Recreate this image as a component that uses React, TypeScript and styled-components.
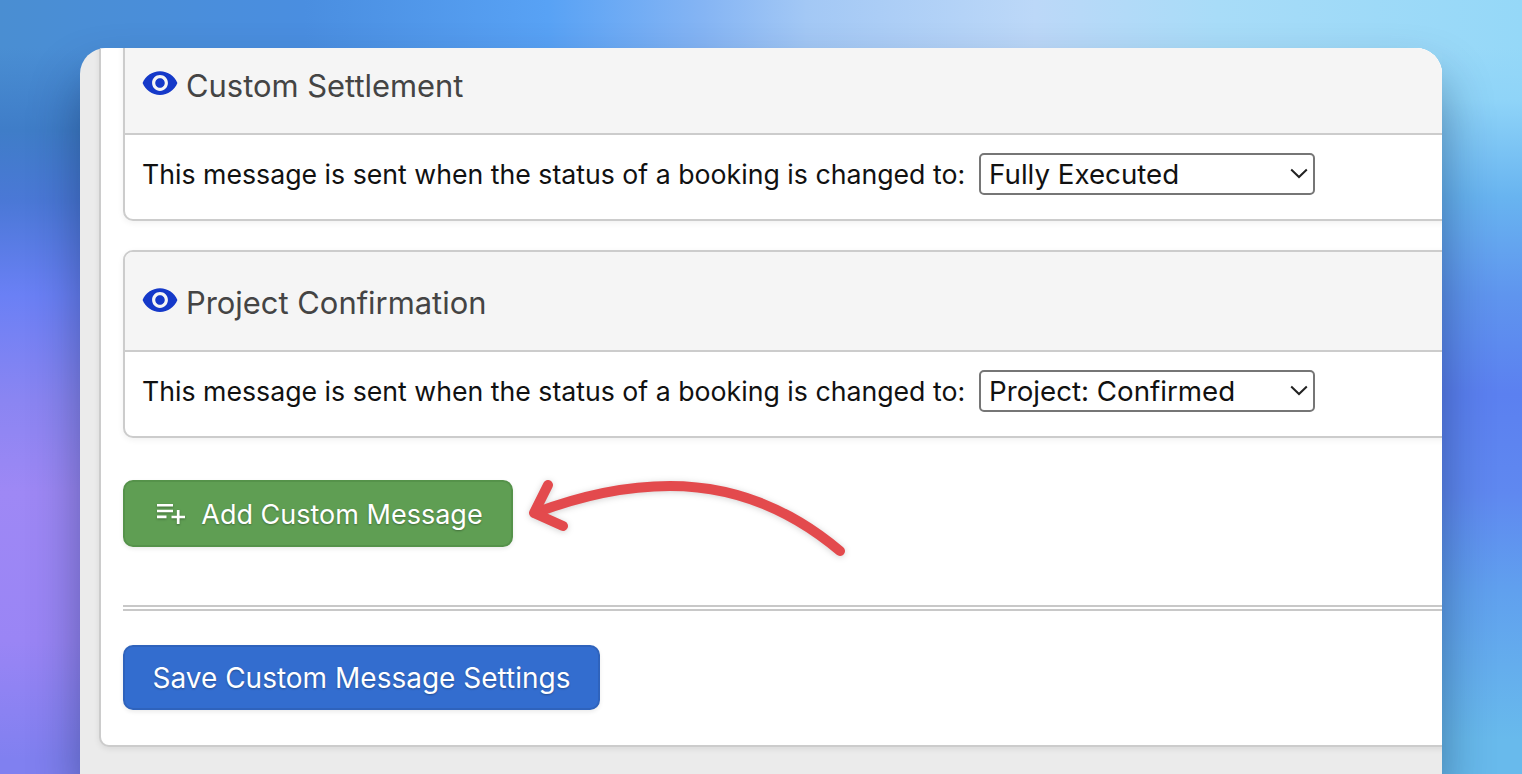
import styled, { createGlobalStyle } from "styled-components";
import { MdVisibility } from "react-icons/md";

const GlobalStyle = createGlobalStyle`
    html, body {
        margin: 0;
        height: 100%;
        overflow: hidden;
    }
    body {
        font-family: Inter, "Liberation Sans", sans-serif;
    }
`;

const Stage = styled.div`
    box-sizing: border-box;
    height: 774px;
    padding: 48px 80px 0;
    overflow: hidden;
    background-color: #68baec;
    background-repeat: no-repeat;
    background-size: 80px 100%, 80px 100%, 100% 100%;
    background-position: left top, right top, left top;
    background-image:
        linear-gradient(180deg, rgba(61, 123, 196, 0) 48px, #3f7dc8 130px, #4a78d6 200px, #6a80f5 295px, #8a85f2 400px, #9e88f5 492px, #9a85f5 640px, #8080f0 760px),
        linear-gradient(180deg, rgba(149, 216, 248, 0) 48px, #8fd4f8 100px, #68b4f0 197px, #5f95ee 295px, #5b80f0 394px, #5f88f0 492px, #60a0ee 590px, #68baec 740px),
        linear-gradient(90deg, #4a8ed2 0, #4a8ee0 20%, #58a2f5 36%, #84b4f4 46%, #a3c8f5 53%, #bcd8f8 68%, #a8dcf8 80%, #95d8f8 100%);
`;

const AppWindow = styled.div`
    box-sizing: border-box;
    height: 100%;
    padding-left: 18.5px;
    overflow: hidden;
    background: #ebebeb;
    border-radius: 26px 26px 0 0;
    box-shadow: 0 30px 50px rgba(10, 30, 70, 0.42);
`;

const Panel = styled.div`
    margin: -40px -40px 0 0;
    padding: 23px 0 35px 22.5px;
    background: #fff;
    border: 2px solid #ccc;
    border-radius: 10px;
    box-shadow: 0 2px 6px rgba(0, 0, 0, 0.08);
`;

const Card = styled.section`
    margin-bottom: 29px;
    background: #fff;
    border: 2px solid #ccc;
    border-radius: 10px;
    box-shadow: 0 2px 6px rgba(0, 0, 0, 0.06);
    overflow: hidden;
`;

const CardHeader = styled.header`
    display: flex;
    align-items: center;
    gap: 9px;
    box-sizing: border-box;
    height: 100px;
    padding: 3px 18px 0;
    background: #f5f5f5;
    border-bottom: 2px solid #ccc;
`;

const EyeIcon = styled(MdVisibility)`
    flex: none;
    width: 38px;
    height: 38px;
    margin: -5px -2px 0 -2px;
    color: #1539c9;
`;

const CardTitle = styled.h3`
    margin: 0;
    font-size: 30.9px;
    font-weight: 400;
    line-height: 40px;
    color: #444;
`;

const CardBody = styled.div`
    display: flex;
    align-items: center;
    gap: 14px;
    padding: 18px 18px 24px 17px;
`;

const StatusText = styled.span`
    font-size: 26.7px;
    line-height: 42px;
    color: #111;
    white-space: nowrap;
`;

const SelectWrap = styled.span`
    position: relative;
    display: block;
    flex: none;
    width: 336px;
    height: 42px;
`;

const StatusSelect = styled.select`
    appearance: none;
    box-sizing: border-box;
    width: 100%;
    height: 100%;
    padding: 0 8px;
    font-family: inherit;
    font-size: 27.7px;
    color: #111;
    background: #fff;
    border: 2px solid #767676;
    border-radius: 5px;
`;

const Chevron = styled.svg`
    position: absolute;
    top: 15px;
    right: 7px;
    width: 18px;
    height: 11px;
    pointer-events: none;
`;

const ActionRow = styled.div`
    position: relative;
    display: flex;
    margin-top: 42px;
`;

const Button = styled.button<{ $tone: string; $edge: string }>`
    display: flex;
    align-items: center;
    justify-content: center;
    box-sizing: border-box;
    padding: 0;
    font-family: inherit;
    font-size: 28px;
    color: #fff;
    text-shadow: 0 1px 2px rgba(0, 0, 0, 0.3);
    white-space: nowrap;
    background: ${(props) => props.$tone};
    border: 2px solid ${(props) => props.$edge};
    border-radius: 10px;
    box-shadow: 0 2px 4px rgba(0, 0, 0, 0.08);
`;

const AddButton = styled(Button)`
    gap: 16px;
    width: 390px;
    height: 67px;
    padding: 2px 0 0 4px;
    font-size: 27px;
`;

const SaveButton = styled(Button)`
    width: 477px;
    height: 65px;
`;

const AddIcon = styled.svg`
    flex: none;
    width: 28px;
    height: 20px;
    margin-top: -1px;
    filter: drop-shadow(0 1px 1px rgba(0, 0, 0, 0.3));
`;

const Arrow = styled.svg`
    position: absolute;
    top: 0;
    left: 402px;
    width: 330px;
    height: 100px;
    overflow: visible;
    filter: drop-shadow(0 1px 3px rgba(0, 0, 0, 0.18));
`;

const DoubleRule = styled.hr`
    height: 2px;
    margin: 58px 0 34px;
    border: 0;
    border-top: 2px solid #c8c8c8;
    border-bottom: 2px solid #c8c8c8;
`;

const messages = [
    { title: "Custom Settlement", status: "Fully Executed" },
    { title: "Project Confirmation", status: "Project: Confirmed" },
];

const App: React.FC = () => {
    return (
        <>
            <GlobalStyle />
            <Stage>
                <AppWindow>
                    <Panel>
                        {messages.map((message) => (
                            <Card key={message.title}>
                                <CardHeader>
                                    <EyeIcon />
                                    <CardTitle>{message.title}</CardTitle>
                                </CardHeader>
                                <CardBody>
                                    <StatusText>This message is sent when the status of a booking is changed to:</StatusText>
                                    <SelectWrap>
                                        <StatusSelect defaultValue={message.status}>
                                            <option>{message.status}</option>
                                        </StatusSelect>
                                        <Chevron viewBox="0 0 18 11">
                                            <path d="M1.2 1.5 L9 9 L16.8 1.5" fill="none" stroke="#222" strokeWidth="2" />
                                        </Chevron>
                                    </SelectWrap>
                                </CardBody>
                            </Card>
                        ))}
                        <ActionRow>
                            <AddButton $tone="#5f9e53" $edge="#55924a">
                                <AddIcon viewBox="0 0 28 20">
                                    <path d="M0 1.2H16M0 7H16M0 12.8H9.5M14.5 13H28M21.2 6V20" fill="none" stroke="#fff" strokeWidth="2.7" />
                                </AddIcon>
                                Add Custom Message
                            </AddButton>
                            <Arrow viewBox="0 0 330 100">
                                <g fill="none" stroke="#e34a4d" strokeWidth="10" strokeLinecap="round" strokeLinejoin="round">
                                    <path d="M315 71 C270 33 215 6 145 6 C100 6 55 16 10 33" />
                                    <path d="M23 5 L9 33 L38 46" />
                                </g>
                            </Arrow>
                        </ActionRow>
                        <DoubleRule />
                        <SaveButton $tone="#336dcf" $edge="#2f63bc">Save Custom Message Settings</SaveButton>
                    </Panel>
                </AppWindow>
            </Stage>
        </>
    );
};

export default App;
